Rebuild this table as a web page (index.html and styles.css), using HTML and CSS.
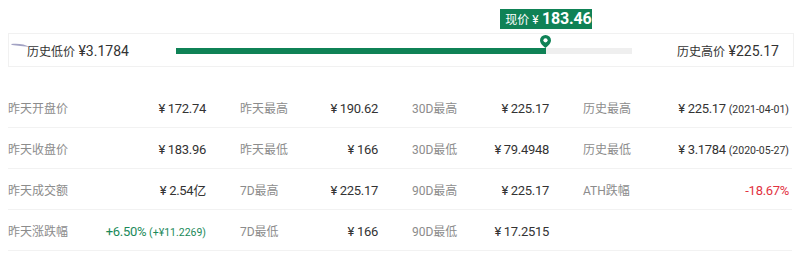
FILE: index.html
```html
<!DOCTYPE html>
<html lang="zh-CN">
<head>
  <meta charset="UTF-8">
  <meta name="viewport" content="width=device-width, initial-scale=1.0">
  <title>价格统计</title>
  <link rel="stylesheet" href="styles.css">
</head>
<body>
  <div class="stats">
    <div class="range">
      <svg class="mark" width="20" height="6" viewBox="0 0 20 6">
        <path d="M0 1 C6 0 14 1 19 4 C13 3 6 3 1 2 Z" fill="#a3a3c4"/>
      </svg>
      <div class="range-low"><span class="range-label">历史低价</span> ¥3.1784</div>
      <div class="track">
        <div class="fill" style="width: 81.2%">
          <svg class="pin" width="11" height="13" viewBox="0 0 11 13">
            <path d="M5.5 0a5.5 5.5 0 0 1 5.5 5.5c0 3.6-5.5 7.5-5.5 7.5S0 9.1 0 5.5A5.5 5.5 0 0 1 5.5 0z" fill="#0f8256"/>
            <circle cx="5.5" cy="5.3" r="2.1" fill="#fff"/>
          </svg>
          <div class="now"><span class="now-label">现价 ¥</span> <b>183.46</b></div>
        </div>
      </div>
      <div class="range-high"><span class="range-label">历史高价</span> ¥225.17</div>
    </div>

    <div class="table">
      <div class="row">
        <div class="pair"><span class="label">昨天开盘价</span><span class="value">¥ 172.74</span></div>
        <div class="pair"><span class="label">昨天最高</span><span class="value">¥ 190.62</span></div>
        <div class="pair"><span class="label">30D最高</span><span class="value">¥ 225.17</span></div>
        <div class="pair"><span class="label">历史最高</span><span class="value">¥ 225.17 <small>(2021-04-01)</small></span></div>
      </div>
      <div class="row">
        <div class="pair"><span class="label">昨天收盘价</span><span class="value">¥ 183.96</span></div>
        <div class="pair"><span class="label">昨天最低</span><span class="value">¥ 166</span></div>
        <div class="pair"><span class="label">30D最低</span><span class="value">¥ 79.4948</span></div>
        <div class="pair"><span class="label">历史最低</span><span class="value">¥ 3.1784 <small>(2020-05-27)</small></span></div>
      </div>
      <div class="row">
        <div class="pair"><span class="label">昨天成交额</span><span class="value">¥ 2.54亿</span></div>
        <div class="pair"><span class="label">7D最高</span><span class="value">¥ 225.17</span></div>
        <div class="pair"><span class="label">90D最高</span><span class="value">¥ 225.17</span></div>
        <div class="pair"><span class="label">ATH跌幅</span><span class="value down">-18.67%</span></div>
      </div>
      <div class="row">
        <div class="pair"><span class="label">昨天涨跌幅</span><span class="value up">+6.50% <small>(+¥11.2269)</small></span></div>
        <div class="pair"><span class="label">7D最低</span><span class="value">¥ 166</span></div>
        <div class="pair"><span class="label">90D最低</span><span class="value">¥ 17.2515</span></div>
        <div class="pair"></div>
      </div>
    </div>
  </div>
</body>
</html>
```

FILE: styles.css
```css
body {
  margin: 0;
  padding: 0;
  background-color: #fff;
  color: #333;
  font-family: Roboto, "Noto Sans CJK SC", sans-serif;
}

.stats {
  padding: 33px 0 0 8px;
  width: 786px;
}

/* price range bar */
.range {
  position: relative;
  display: flex;
  align-items: center;
  height: 32px;
  border: 1px solid #f1f1f1;
  padding: 0 14px 0 18px;
  font-size: 14px;
  color: #333;
}

.mark {
  position: absolute;
  left: 2px;
  top: 9px;
}

.range-label {
  font-size: 12px;
}

.range-low {
  width: 149px;
}

.track {
  width: 456px;
  height: 6px;
  background-color: #efefef;
  margin-top: 1px;
}

.fill {
  position: relative;
  height: 100%;
  background-color: #0f8256;
}

.pin {
  position: absolute;
  right: -5px;
  bottom: 6px;
}

.now {
  position: absolute;
  right: -46px;
  bottom: 25px;
  width: 82px;
  height: 20px;
  padding: 0 5px;
  background-color: #0f8256;
  color: #fff;
  line-height: 20px;
  white-space: nowrap;
}

.now-label {
  font-size: 12px;
}

.now b {
  font-size: 16px;
  letter-spacing: -0.2px;
}

.range-high {
  flex: 1;
  text-align: right;
}

/* stats table */
.table {
  margin-top: 20px;
  margin-right: 2px;
}

.row {
  display: grid;
  grid-template-columns: 198px 138px 137px 206px;
  column-gap: 34px;
  height: 40px;
  align-items: center;
  border-bottom: 1px solid #f2f2f2;
}

.pair {
  display: flex;
  justify-content: space-between;
  align-items: baseline;
  white-space: nowrap;
}

.label {
  font-size: 12px;
  color: #8c8c8c;
}

.value {
  font-size: 13px;
  letter-spacing: -0.3px;
  color: #333;
}

.value small {
  font-size: 10.5px;
  letter-spacing: 0;
}

.up {
  color: #1b8a5a;
}

.down {
  color: #e2323f;
}
```
